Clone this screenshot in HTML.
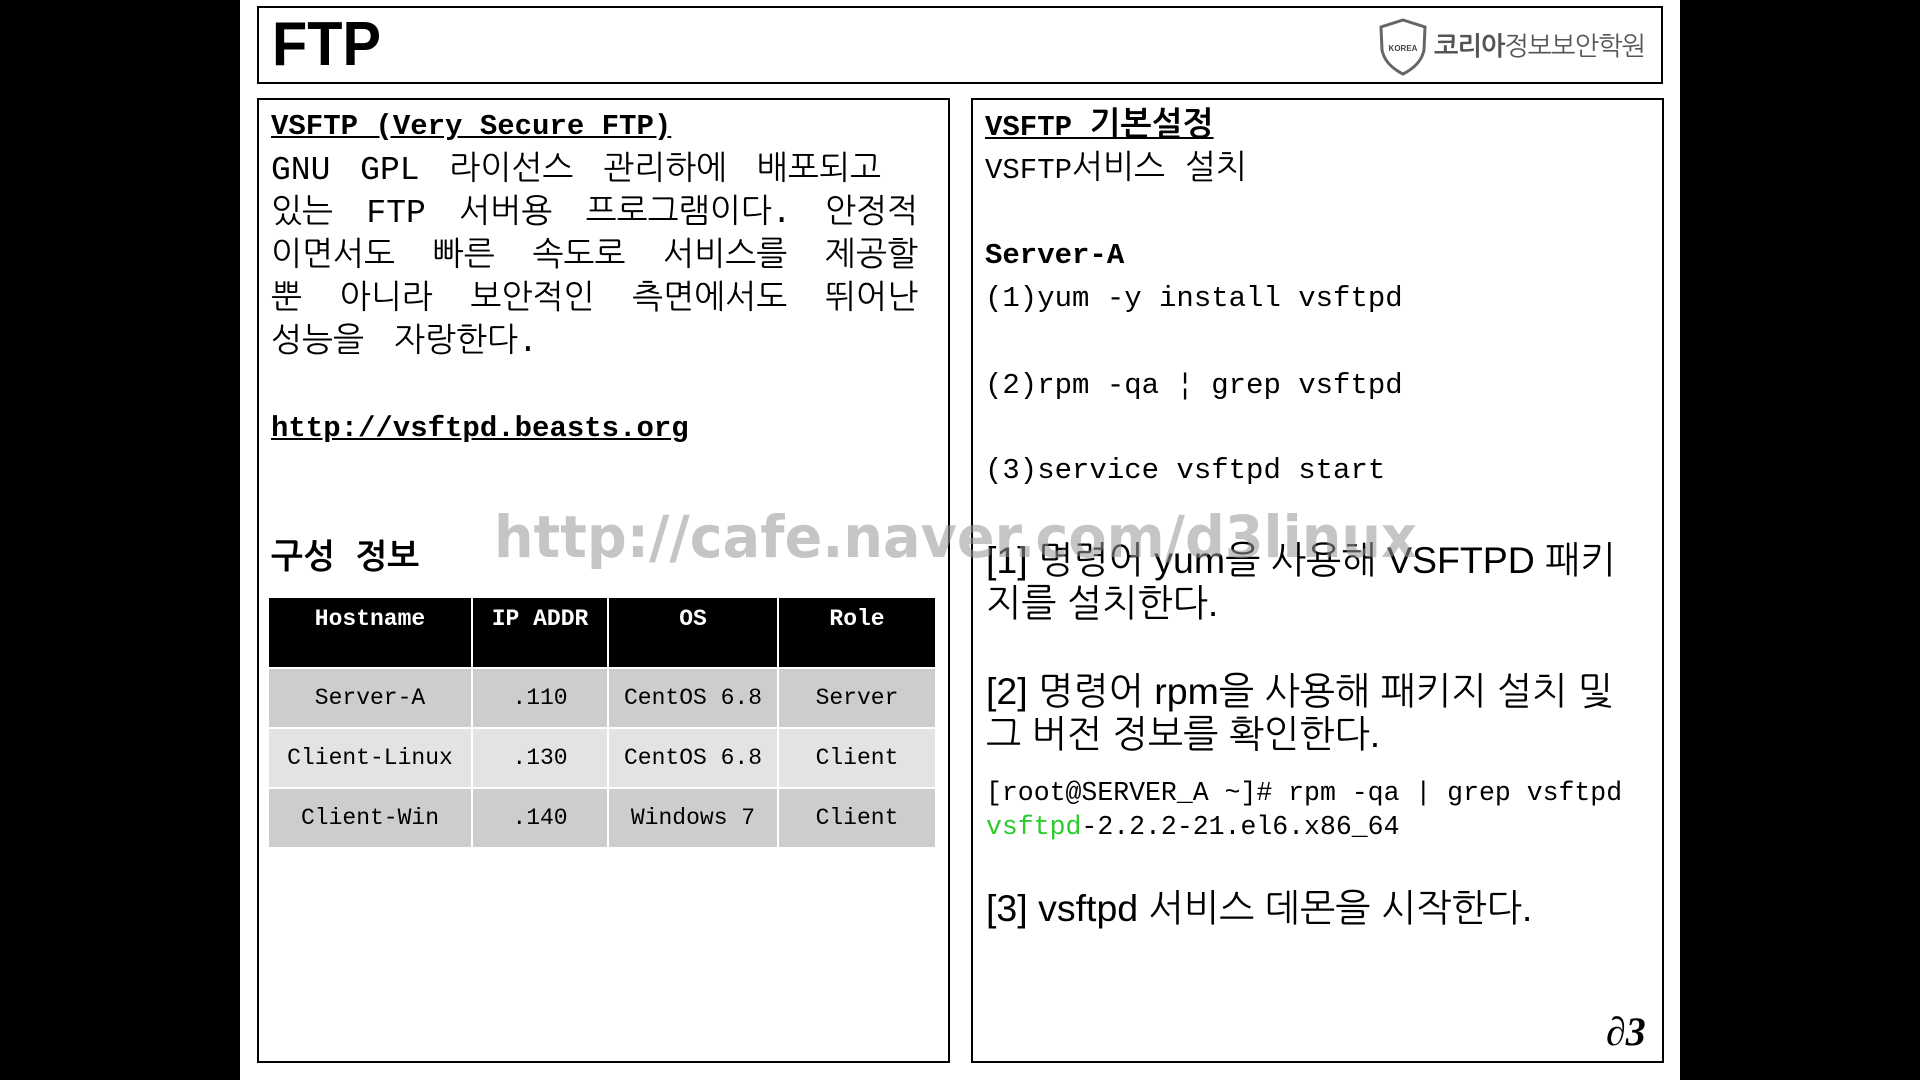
<!DOCTYPE html>
<html><head><meta charset="utf-8"><style>
*{margin:0;padding:0;box-sizing:border-box}
body{width:1920px;height:1080px;background:#000;position:relative;overflow:hidden;font-family:"Liberation Mono","NanumGothic",monospace;color:#000}
.slide{position:absolute;left:240px;top:0;width:1440px;height:1080px;background:#fff}
.box{position:absolute;border:2px solid #000}
.t{position:absolute;white-space:nowrap;font-size:29px;line-height:40px}
.j{font-size:33px;text-align:justify;text-align-last:justify;white-space:normal}
.p{font-family:"Liberation Sans","NanumGothic",sans-serif;font-size:37.5px}
table{position:absolute;left:269px;top:598px;width:668px;border-collapse:collapse;font-size:23px}
td,th{text-align:center;border-right:2px solid #fff;border-bottom:2px solid #fff}
th{background:#000;color:#fff;height:70px;font-weight:bold;vertical-align:top;padding-top:8px}
td{height:60px}
tr.a td{background:#cdcdcd}tr.b td{background:#e3e3e3}
</style></head><body>
<div class="slide"></div>
<div class="box" style="left:257px;top:6px;width:1406px;height:78px"></div>
<div class="t" style="left:272px;top:10px;font-family:'Liberation Sans',sans-serif;font-weight:bold;font-size:62px;line-height:70px;transform:scaleX(0.93);transform-origin:left">FTP</div>
<svg style="position:absolute;left:1378px;top:18px" width="50" height="58" viewBox="0 0 50 58"><path d="M25 2 L47 9 L46 32 Q43 47 25 56 Q7 47 4 32 L3 9 Z" fill="none" stroke="#666" stroke-width="3"/><text x="25" y="33" font-size="8" text-anchor="middle" font-family="Liberation Sans" font-weight="bold" fill="#444">KOREA</text></svg>
<div class="t" style="left:1434px;top:26px;font-family:'Liberation Sans','NanumGothic',sans-serif;font-size:26px;font-weight:bold;color:#555;letter-spacing:-1px">코리아<span style="font-weight:normal">정보보안학원</span></div>

<div class="box" style="left:257px;top:98px;width:693px;height:965px"></div>
<div class="box" style="left:971px;top:98px;width:693px;height:965px"></div>

<div class="t" style="left:271px;top:107px;font-weight:bold;text-decoration:underline">VSFTP (Very Secure FTP)</div>
<div class="t j" style="left:271px;top:151px;width:610px">GNU GPL 라이선스 관리하에 배포되고</div>
<div class="t j" style="left:271px;top:194px;width:647px">있는 FTP 서버용 프로그램이다. 안정적</div>
<div class="t j" style="left:271px;top:237px;width:647px">이면서도 빠른 속도로 서비스를 제공할</div>
<div class="t j" style="left:271px;top:280px;width:647px">뿐 아니라 보안적인 측면에서도 뛰어난</div>
<div class="t" style="left:271px;top:323px;font-size:33px;word-spacing:10px">성능을 자랑한다.</div>
<div class="t" style="left:271px;top:409px;font-weight:bold;text-decoration:underline">http://vsftpd.beasts.org</div>
<div class="t" style="left:271px;top:540px;font-weight:bold;font-size:34px">구성 정보</div>
<table>
<tr><th style="width:203px">Hostname</th><th style="width:136px">IP ADDR</th><th style="width:170px">OS</th><th>Role</th></tr>
<tr class="a"><td>Server-A</td><td>.110</td><td>CentOS 6.8</td><td>Server</td></tr>
<tr class="b"><td>Client-Linux</td><td>.130</td><td>CentOS 6.8</td><td>Client</td></tr>
<tr class="a"><td>Client-Win</td><td>.140</td><td>Windows 7</td><td>Client</td></tr>
</table>

<div class="t" style="left:985px;top:107px;font-weight:bold;text-decoration:underline">VSFTP <span style="font-size:33px">기본설정</span></div>
<div class="t" style="left:985px;top:150px">VSFTP<span style="font-size:33px">서비스 설치</span></div>
<div class="t" style="left:985px;top:236px;font-weight:bold">Server-A</div>
<div class="t" style="left:985px;top:279px">(1)yum -y install vsftpd</div>
<div class="t" style="left:985px;top:366px">(2)rpm -qa ¦ grep vsftpd</div>
<div class="t" style="left:985px;top:451px">(3)service vsftpd start</div>
<div class="t p" style="left:986px;top:540px">[1] 명령어 yum을 사용해 VSFTPD 패키</div>
<div class="t p" style="left:986px;top:583px">지를 설치한다.</div>
<div class="t p" style="left:986px;top:671px">[2] 명령어 rpm을 사용해 패키지 설치 및</div>
<div class="t p" style="left:986px;top:714px">그 버전 정보를 확인한다.</div>
<div class="t" style="left:986px;top:776px;font-size:26.5px;line-height:34px">[root@SERVER_A ~]# rpm -qa | grep vsftpd</div>
<div class="t" style="left:986px;top:810px;font-size:26.5px;line-height:34px"><span style="color:#2ccc2c">vsftpd</span>-2.2.2-21.el6.x86_64</div>
<div class="t p" style="left:986px;top:888px">[3] vsftpd 서비스 데몬을 시작한다.</div>
<div class="t" style="left:1606px;top:1012px;font-family:'Liberation Serif',serif;font-style:italic;font-weight:bold;font-size:40px">∂3</div>

<div class="t" style="left:494px;top:502px;font-family:'DejaVu Sans',sans-serif;font-weight:bold;font-size:58px;line-height:70px;color:rgba(150,150,150,0.55);transform:scaleX(0.96);transform-origin:left">http://cafe.naver.com/d3linux</div>
</body></html>
